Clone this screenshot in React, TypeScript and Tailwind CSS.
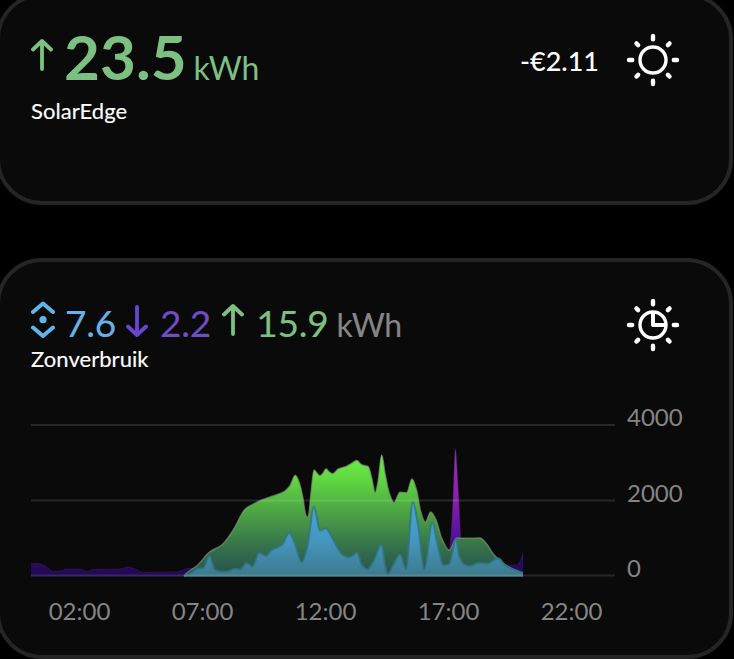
import React from "react";
import { clsx } from "clsx";

type Point = [number, number];

const BASELINE = 576.5;

const solar: Point[] = [
  [184, 576], [188, 572], [196.7, 566], [210, 551.7], [221.7, 545], [233.3, 530],
  [245, 509.3], [251.7, 505], [261.7, 500], [270, 497], [278.3, 494.3], [285, 491],
  [290, 485.7], [295.3, 475.3], [299.3, 482.7], [302.7, 496.7], [305.7, 515],
  [307.2, 517.5], [308.7, 515], [311, 493], [314, 470], [316.7, 472.7], [320, 475.7],
  [323.3, 472.7], [326, 468.7], [329.3, 472], [332.7, 473.7], [338.3, 469],
  [346.7, 466.3], [351.7, 463.3], [356.7, 460.5], [361.7, 464.7], [368.3, 466.7],
  [371.7, 478], [375.2, 492.7], [378, 481.7], [381.7, 455], [385, 473.3],
  [389.3, 493.3], [394, 502.7], [400, 492.3], [406.7, 492.7], [412, 479],
  [416.7, 490.7], [420.7, 511.7], [425.3, 522.3], [430.7, 512], [436, 520],
  [441.7, 538.3], [449.3, 550.3], [456.7, 538], [466.7, 538.3], [480, 538],
  [486.7, 544], [493.3, 554], [500, 560.7], [508.3, 566.7], [516.7, 570.7], [523, 573.3],
];

const selfUse: Point[] = [
  [184, 576], [190, 574], [198.3, 568.3], [203.3, 568.3], [209.3, 555.7], [215, 570],
  [223.3, 572], [230, 570.7], [235, 568.7], [240, 569.7], [246.7, 563], [252.7, 566.7],
  [259, 553], [266, 555.7], [271.7, 550], [281.7, 545], [289.3, 532.7], [295, 544],
  [301.7, 562.3], [307.3, 546.7], [314, 506.7], [320, 530.7], [325.7, 528.3],
  [333.3, 540], [341.7, 554], [348.3, 557.3], [352.7, 555.7], [357, 552.3],
  [361.7, 565], [367.3, 569.3], [373.3, 561.7], [381.7, 544.3], [385, 565],
  [387.7, 574.3], [393.3, 565], [400, 554.3], [406, 569.3], [412.7, 502],
  [418.3, 526.7], [424.3, 569.3], [432.3, 522.3], [437.3, 543.3], [443.3, 565.3],
  [449.3, 564], [456, 538.7], [459.3, 556.7], [465, 565], [470, 566], [478.3, 563],
  [486.7, 563.7], [498.3, 558.3], [505, 565], [513.3, 569.3], [523, 572.7],
];

const grid: Point[] = [
  [31, 563.7], [36.7, 563.3], [45, 566], [53.3, 571.3], [60, 571], [66.7, 569],
  [80, 569.3], [87.3, 571.3], [93.3, 569.3], [106.7, 569.3], [120, 569], [128.3, 567],
  [135, 569], [143.3, 572.3], [176.7, 572], [185, 569.3], [193.3, 568], [203.3, 568.7],
  [215, 571], [300, 571], [440, 571], [447, 562], [450, 546], [452.7, 506.7],
  [455.4, 449.3], [458.3, 490], [460.7, 536.7], [464, 565], [480, 570], [500, 563.7],
  [510, 565.3], [516.7, 565], [520, 561.7], [523, 553.3],
];

// Monotone cubic, so the peaks never overshoot
function curve(points: Point[]) {
  const slopes = points.slice(1).map((p, i) => (p[1] - points[i][1]) / (p[0] - points[i][0]));
  const tangents = points.map((_, i) => {
    if (i === 0) return slopes[0];
    if (i === points.length - 1) return slopes[i - 1];
    const a = slopes[i - 1];
    const b = slopes[i];
    return a * b <= 0 ? 0 : (2 * a * b) / (a + b);
  });
  return points.slice(1).reduce((d, [x, y], i) => {
    const [px, py] = points[i];
    const h = (x - px) / 3;
    return `${d}C${px + h},${py + h * tangents[i]} ${x - h},${y - h * tangents[i + 1]} ${x},${y}`;
  }, `M${points[0][0]},${points[0][1]}`);
}

function area(points: Point[]) {
  return `${curve(points)}L${points[points.length - 1][0]},${BASELINE}L${points[0][0]},${BASELINE}Z`;
}

const Card = ({ className, children }: { className?: string; children: React.ReactNode }) => (
  <section
    className={clsx(
      "-ml-1 w-[737px] shrink-0 rounded-[46px] border-4 border-[#252525] bg-[#0a0a0a] pl-[31px]",
      className
    )}
  >
    {children}
  </section>
);

const Arrow = ({ down, className }: { down?: boolean; className?: string }) => (
  <svg viewBox="0 0 22 32" className={clsx("h-8 w-[22px] shrink-0", className)} fill="none" stroke="currentColor" strokeWidth="3.8" strokeLinecap="round" strokeLinejoin="round">
    <path d={down ? "M11 2V30M2 21.5L11 30L20 21.5" : "M11 30V2M2 10.5L11 2L20 10.5"} />
  </svg>
);

const SunIcon = ({ clock }: { clock?: boolean }) => (
  <svg viewBox="-27 -27 54 54" className="size-[54px] shrink-0" fill="none" stroke="#fff" strokeWidth="4.4" strokeLinecap="round">
    <circle r="13" strokeWidth="3.4" />
    {[0, 45, 90, 135, 180, 225, 270, 315].map((angle) => (
      <path key={angle} d={angle % 90 ? "M0 -21V-23.4" : "M0 -20.8V-24"} transform={`rotate(${angle})`} />
    ))}
    {clock && <path d="M0 -12V0H12" strokeWidth="4" strokeLinejoin="round" />}
  </svg>
);

const Chart = () => (
  <svg viewBox="31 422 584 156" className="h-[156px] w-[584px] shrink-0">
    <defs>
      <linearGradient id="green" gradientUnits="userSpaceOnUse" x1="0" y1="455" x2="0" y2="576">
        <stop offset="0" stopColor="#6cf043" />
        <stop offset="0.2" stopColor="#60d840" />
        <stop offset="0.5" stopColor="#4a9e45" />
        <stop offset="0.8" stopColor="#336b4b" />
        <stop offset="1" stopColor="#285250" />
      </linearGradient>
      <linearGradient id="blue" gradientUnits="userSpaceOnUse" x1="0" y1="502" x2="0" y2="576">
        <stop offset="0" stopColor="#4ba3d3" />
        <stop offset="0.5" stopColor="#4697c2" />
        <stop offset="1" stopColor="#3c7a8c" />
      </linearGradient>
      <linearGradient id="purple" gradientUnits="userSpaceOnUse" x1="0" y1="449" x2="0" y2="576">
        <stop offset="0" stopColor="#a02cb4" />
        <stop offset="0.4" stopColor="#8a1fac" />
        <stop offset="0.72" stopColor="#4c109a" />
        <stop offset="0.92" stopColor="#260a5c" />
        <stop offset="1" stopColor="#220852" />
      </linearGradient>
    </defs>
    <path d={area(grid)} fill="url(#purple)" />
    <path d={curve(grid)} fill="none" stroke="#4a1c80" strokeOpacity="0.4" />
    <path d={area(solar)} fill="url(#green)" />
    <path d={curve(solar)} fill="none" stroke="#7d9a78" strokeOpacity="0.65" strokeWidth="1.5" />
    <path d={area(selfUse)} fill="url(#blue)" />
    <path d={curve(selfUse)} fill="none" stroke="#2f7680" strokeOpacity="0.8" strokeWidth="2" />
    {[425, 500.5, 575.5].map((y) => (
      <path key={y} d={`M31 ${y}H615`} stroke="#fff" strokeOpacity="0.12" strokeWidth="2" />
    ))}
  </svg>
);

export default function App() {
  return (
    <main className="flex h-[659px] w-[734px] flex-col overflow-hidden bg-black font-['Lato',sans-serif] leading-none text-white">
      <Card className="-mt-[7px] h-[212px] pt-7">
        <div className="flex justify-between pr-[49px]">
          <div>
            <div className="flex items-baseline text-[#7cc082]">
              <Arrow className="mt-[14px] self-start" />
              <span className="ml-[11px] text-[62px] leading-none font-bold">23.5</span>
              <span className="ml-[7px] text-[32px] leading-none tracking-[-0.4px]">kWh</span>
            </div>
            <div className="mt-[13px] text-[22px] leading-none tracking-[0.05px] [-webkit-text-stroke:0.15px]">SolarEdge</div>
          </div>
          <div className="flex items-start pt-2">
            <span className="mt-[14px] mr-[27px] text-[27px] leading-none font-medium">-€2.11</span>
            <SunIcon />
          </div>
        </div>
      </Card>

      <Card className="mt-[53px] h-[401px] pt-[42px]">
        <div className="flex h-20 justify-between pr-[49px]">
          <div>
            <div className="flex items-baseline text-[37px] leading-none tracking-[-0.2px] [-webkit-text-stroke:0.15px]">
              <svg viewBox="0 0 24 40" className="-mt-1 h-10 w-6 shrink-0 self-start text-[#62b4e8]" fill="none" stroke="currentColor" strokeWidth="4" strokeLinecap="round" strokeLinejoin="round">
                <path d="M2 12L12 3.5L22 12M2 27.5L12 36L22 27.5" />
                <circle cx="12" cy="19.7" r="3.6" fill="currentColor" stroke="none" />
              </svg>
              <span className="ml-[10px] text-[#6ab0e4]">7.6</span>
              <Arrow down className="ml-[10px] mt-px self-start text-[#6a46d0]" />
              <span className="ml-3 text-[#6f4ec4]">2.2</span>
              <Arrow className="ml-[11px] self-start text-[#7cc082]" />
              <span className="ml-3 text-[#7cc082]">15.9</span>
              <span className="ml-2 text-[32px] leading-none tracking-[-0.4px] text-[#858585]">kWh</span>
            </div>
            <div className="mt-[7px] text-[22px] leading-none tracking-[0.05px] [-webkit-text-stroke:0.15px]">Zonverbruik</div>
          </div>
          <div className="-mt-[6px]">
            <SunIcon clock />
          </div>
        </div>

        <div className="mt-[21px] flex text-2xl leading-none text-[#858585]">
          <div className="pt-[17px]">
            <Chart />
          </div>
          <div className="ml-3 flex h-[175px] flex-col justify-between">
            <span className="leading-none">4000</span>
            <span className="leading-none">2000</span>
            <span className="leading-none">0</span>
          </div>
        </div>
        <div className="mt-[19px] ml-[-13px] flex text-2xl text-[#858585]">
          {["02:00", "07:00", "12:00", "17:00", "22:00"].map((time) => (
            <span key={time} className="w-[123px] text-center leading-none">
              {time}
            </span>
          ))}
        </div>
      </Card>
    </main>
  );
}
